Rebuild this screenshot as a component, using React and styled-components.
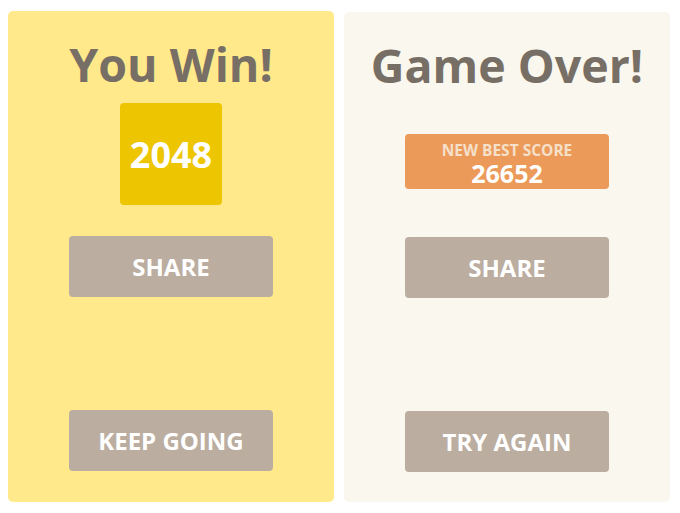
import React from 'react';
import styled, { createGlobalStyle } from 'styled-components';

const GlobalStyle = createGlobalStyle`
    body {
        margin: 0;
        background: #ffffff;
        font-family: "Open Sans", "Noto Sans", sans-serif;
    }
`;

function App() {
    return (
        <>
            <GlobalStyle />
            <Screen>
                <Panel $bg="#FFE98A" $offset={0}>
                    <Title>You Win!</Title>
                    <Tile>2048</Tile>
                    <Button $top={31}>SHARE</Button>
                    <Button $top={113}>KEEP GOING</Button>
                </Panel>
                <Panel $bg="#FAF7EE" $offset={1}>
                    <Title>Game Over!</Title>
                    <ScoreBox>
                        <ScoreLabel>NEW BEST SCORE</ScoreLabel>
                        <ScoreValue>26652</ScoreValue>
                    </ScoreBox>
                    <Button $top={48}>SHARE</Button>
                    <Button $top={113}>TRY AGAIN</Button>
                </Panel>
            </Screen>
        </>
    );
}

export default App;

// 두 패널이 나란히 놓이는 화면
const Screen = styled.div`
    display: flex;
    flex-direction: row;
    gap: 10px;
    padding: 11px 10px 0 8px;
`;

// 결과 패널
const Panel = styled.div`
    width: 326px;
    margin-top: ${props => props.$offset}px;
    padding: 21px 0 30px;
    box-sizing: border-box;
    display: flex;
    flex-direction: column;
    align-items: center;
    background-color: ${props => props.$bg};
    border-radius: 5px;
`;

// 큰 제목
const Title = styled.div`
    height: 64px;
    font-size: 46.5px;
    line-height: 64px;
    font-weight: 700;
    color: #776E65;
    white-space: nowrap;
`;

// 2048 타일
const Tile = styled.div`
    width: 102px;
    height: 102px;
    margin-top: 7px;
    display: flex;
    align-items: center;
    justify-content: center;
    background-color: #EDC501;
    border-radius: 4px;
    color: #ffffff;
    font-size: 36px;
    font-weight: 700;
`;

// 최고 점수 상자
const ScoreBox = styled.div`
    width: 204px;
    height: 55px;
    margin-top: 37px;
    display: flex;
    flex-direction: column;
    align-items: center;
    justify-content: center;
    background-color: #EC9A59;
    border-radius: 4px;
`;

const ScoreLabel = styled.div`
    font-size: 15.5px;
    line-height: 20px;
    margin-top: 2px;
    font-weight: 700;
    color: #F5E0CA;
`;

const ScoreValue = styled.div`
    font-size: 25px;
    line-height: 26px;
    font-weight: 700;
    color: #ffffff;
`;

// 회색 버튼
const Button = styled.div`
    width: 204px;
    height: 61px;
    margin-top: ${props => props.$top}px;
    display: flex;
    align-items: center;
    justify-content: center;
    background-color: #BBADA0;
    border-radius: 4px;
    color: #ffffff;
    font-size: 24px;
    font-weight: 700;
    cursor: pointer;
`;
